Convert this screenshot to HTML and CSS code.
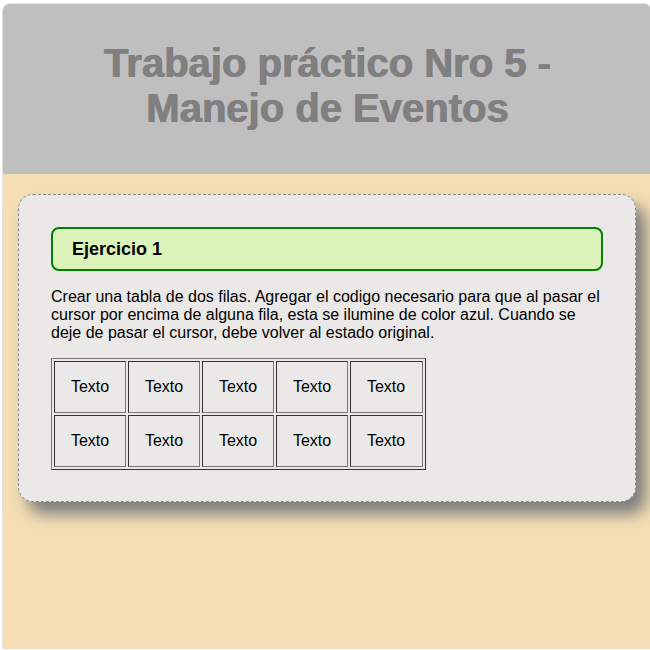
FILE: index.html
```html
<!DOCTYPE html>
<html lang="es">
<head>
<meta charset="utf-8">
<title>Trabajo práctico Nro 5</title>
<link rel="stylesheet" href="styles.css">
</head>
<body>
<div class="page">
  <header class="header">
    <h1 class="title">Trabajo práctico Nro 5 -<br>Manejo de Eventos</h1>
  </header>
  <main class="main">
    <section class="card">
      <div class="exercise">
        <h2 class="exercise-title">Ejercicio 1</h2>
      </div>
      <p class="desc">Crear una tabla de dos filas. Agregar el codigo necesario para que al pasar el cursor por encima de alguna fila, esta se ilumine de color azul. Cuando se deje de pasar el cursor, debe volver al estado original.</p>
      <table class="grid" border="1">
        <tr><td>Texto</td><td>Texto</td><td>Texto</td><td>Texto</td><td>Texto</td></tr>
        <tr><td>Texto</td><td>Texto</td><td>Texto</td><td>Texto</td><td>Texto</td></tr>
      </table>
    </section>
  </main>
</div>
</body>
</html>
```
FILE: styles.css
```css
html, body {
  margin: 0;
  padding: 0;
  overflow: hidden;
  background: #ffffff;
  font-family: "Liberation Sans", Arial, sans-serif;
}
.page {
  margin: 3px 0 0 2px;
  width: 648px;
  height: 645px;
  border: 1px solid #e4e4e4;
  border-bottom: 0;
  border-radius: 8px 8px 0 0;
  background: #f5deb3;
  overflow: hidden;
}
.header {
  background: #bfbfbf;
  height: 170px;
  box-sizing: border-box;
  padding-top: 37px;
}
.title {
  margin: 0;
  text-align: center;
  font-size: 40px;
  font-weight: bold;
  color: #808080;
  text-shadow: 1px 0 0 #7a7a7a;
}
.main {
  padding: 20px 15px 0 15px;
}
.card {
  background: #eae9e7;
  border: 1px dashed #8a8a8a;
  border-radius: 15px;
  padding: 32px 32px 31px;
  box-shadow: 10px 12px 16px 0 #7c7c7c;
}
.exercise {
  background: #dcf4b9;
  border: 2px solid #008000;
  border-radius: 8px;
  padding: 10px 19px;
}
.exercise-title {
  margin: 0;
  font-size: 18px;
  line-height: 20px;
  font-weight: bold;
  color: #000;
}
.desc {
  margin: 17px 0 16px;
  font-size: 16px;
  line-height: 18px;
  color: #000;
}
.grid {
  border-spacing: 2px;
  border: 1px solid #555;
  border-color: #777 #333 #333 #777;
}
.grid td {
  border: 1px solid #333;
  border-color: #333 #777 #777 #333;
  width: 40px;
  padding: 16px 15px;
  font-size: 16px;
  line-height: 18px;
  text-align: center;
  color: #000;
}
.grid td:last-child {
  padding-right: 16px;
}
```
